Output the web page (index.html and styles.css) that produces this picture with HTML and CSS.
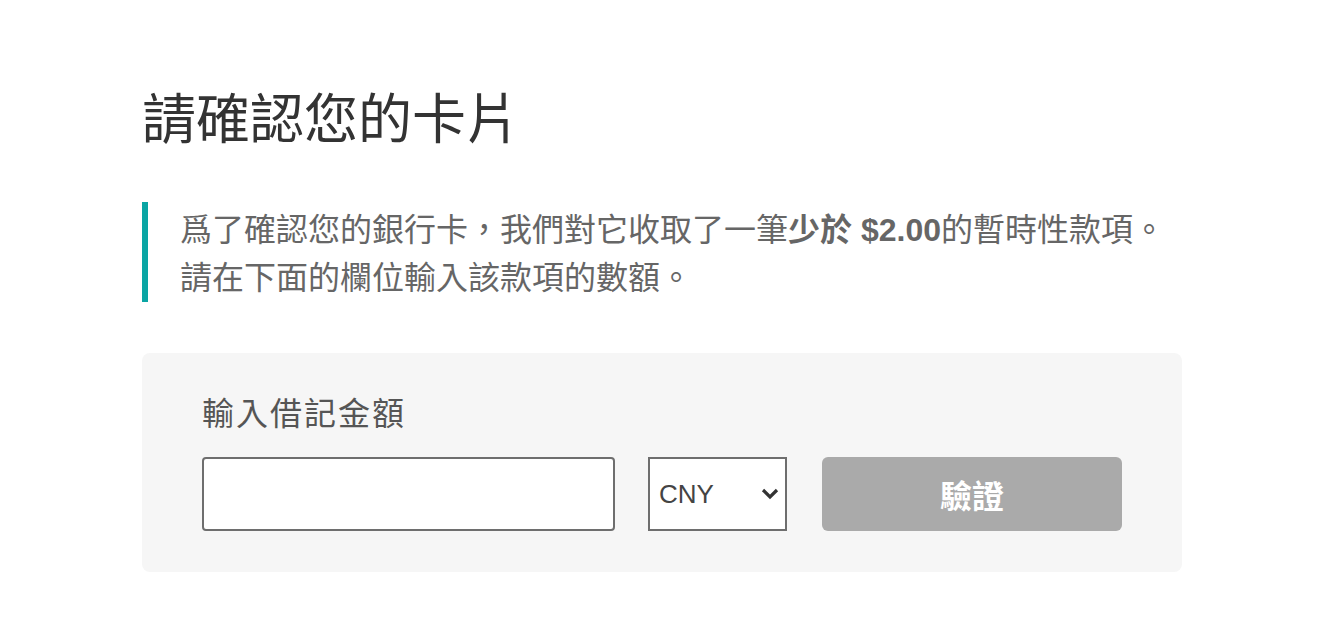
FILE: index.html
```html
<!DOCTYPE html>
<html lang="zh-Hant">
<head>
  <meta charset="UTF-8">
  <title>請確認您的卡片</title>
  <link rel="stylesheet" href="styles.css">
</head>
<body>
<div class="container">
  <h1 class="title">請確認您的卡片</h1>

  <p class="notice">
    爲了確認您的銀行卡，我們對它收取了一筆<strong>少於 $2.00</strong>的暫時性款項。<br>
    請在下面的欄位輸入該款項的數額。
  </p>

  <form class="card" onsubmit="return false">
    <label class="label" for="amount">輸入借記金額</label>
    <div class="row">
      <input class="amount" id="amount" type="text">
      <div class="select-wrap">
        <select class="currency">
          <option>CNY</option>
          <option>USD</option>
        </select>
        <svg class="chevron" width="18" height="12" viewBox="0 0 18 12">
          <path d="M2 2 L9 9 L16 2" fill="none" stroke="#333" stroke-width="3.2"/>
        </svg>
      </div>
      <button class="verify" type="submit" disabled>驗證</button>
    </div>
  </form>
</div>
</body>
</html>
```

FILE: styles.css
```css
body {
  margin: 0;
  background: #fff;
  font-family: "Liberation Sans", "Noto Sans CJK TC", sans-serif;
  color: #666;
  text-spacing-trim: space-all;
}
.container {
  max-width: 1040px;
  margin: 0 auto;
  padding-top: 89px;
}
.title {
  margin: 0;
  font-size: 54px;
  line-height: 62px;
  font-weight: 400;
  color: #333;
}
.notice {
  margin: 51px 0 0;
  border-left: 6px solid #0aa5a4;
  padding: 4px 0 0 32px;
  font-size: 32px;
  line-height: 48px;
  color: #666;
}
.notice strong {
  font-weight: 700;
}
.card {
  margin-top: 51px;
  background: #f6f6f6;
  border-radius: 8px;
  padding: 41px 60px 41px;
}
.label {
  display: block;
  font-size: 32px;
  line-height: 40px;
  letter-spacing: 2px;
  color: #555;
  margin-bottom: 23px;
}
.row {
  display: flex;
  align-items: stretch;
  height: 74px;
}
.amount {
  width: 413px;
  box-sizing: border-box;
  border: 2px solid #6e6e6e;
  border-radius: 4px;
  background: #fff;
  margin: 0 33px 0 0;
  font-size: 26px;
  padding: 0 12px;
}
.select-wrap {
  position: relative;
  width: 139px;
}
.currency {
  appearance: none;
  -webkit-appearance: none;
  width: 100%;
  height: 100%;
  box-sizing: border-box;
  border: 2px solid #6e6e6e;
  border-radius: 0;
  background: #fff;
  padding: 0 0 0 9px;
  font-family: "Liberation Sans", sans-serif;
  font-size: 26px;
  color: #444;
}
.chevron {
  position: absolute;
  right: 8px;
  top: 31px;
  pointer-events: none;
}
.verify {
  margin-left: auto;
  width: 300px;
  border: none;
  border-radius: 6px;
  background: #aaa;
  color: #fff;
  font-family: "Liberation Sans", "Noto Sans CJK TC", sans-serif;
  font-size: 32px;
  font-weight: 700;
}
```
